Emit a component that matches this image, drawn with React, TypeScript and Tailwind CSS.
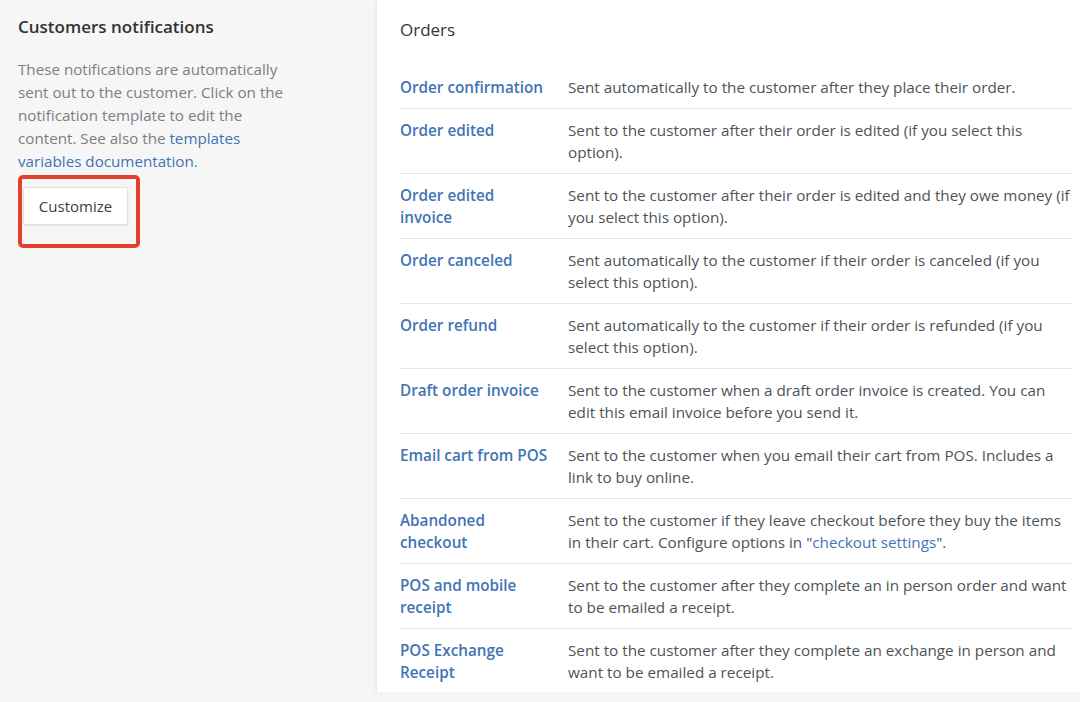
import React from 'react';

interface NotificationRow {
  name: string;
  description: React.ReactNode;
}

const rows: NotificationRow[] = [
  { name: 'Order confirmation', description: 'Sent automatically to the customer after they place their order.' },
  { name: 'Order edited', description: 'Sent to the customer after their order is edited (if you select this option).' },
  { name: 'Order edited invoice', description: 'Sent to the customer after their order is edited and they owe money (if you select this option).' },
  { name: 'Order canceled', description: 'Sent automatically to the customer if their order is canceled (if you select this option).' },
  { name: 'Order refund', description: 'Sent automatically to the customer if their order is refunded (if you select this option).' },
  { name: 'Draft order invoice', description: 'Sent to the customer when a draft order invoice is created. You can edit this email invoice before you send it.' },
  { name: 'Email cart from POS', description: 'Sent to the customer when you email their cart from POS. Includes a link to buy online.' },
  {
    name: 'Abandoned checkout',
    description: (
      <>
        Sent to the customer if they leave checkout before they buy the items in their cart. Configure options in "
        <a className="text-[#3f74b5]">checkout settings</a>".
      </>
    ),
  },
  { name: 'POS and mobile receipt', description: 'Sent to the customer after they complete an in person order and want to be emailed a receipt.' },
  { name: 'POS Exchange Receipt', description: 'Sent to the customer after they complete an exchange in person and want to be emailed a receipt.' },
];

export default function App() {
  return (
    <div
      className="flex w-[1080px] h-[702px] overflow-hidden bg-[#f6f6f7] text-[15.25px]"
      style={{ fontFamily: '"Open Sans", "Noto Sans", sans-serif' }}
    >
      {/* Sidebar */}
      <aside className="w-[376px] shrink-0 pl-[18px] pt-[14px]">
        <h2 className="text-[17px] font-semibold text-[#2f3337] leading-[26px]">Customers notifications</h2>
        <p className="mt-[18px] w-[272px] text-[15.2px] leading-[23px] text-[#7a7f84]">
          These notifications are automatically sent out to the customer. Click on the notification template to edit the
          content. See also the <a className="text-[#3f74b5]">templates variables documentation</a>.
        </p>
        {/* highlighted button */}
        <div className="mt-[2px] w-[122px] h-[73px] rounded-[5px] border-4 border-[#e5402d] pl-px pt-2">
          <button className="w-[105px] h-[38px] bg-white border border-[#e1e1e1] rounded-[2px] shadow-[0_1px_2px_rgba(0,0,0,0.08)] text-[15px] text-[#3a3d40]">
            Customize
          </button>
        </div>
      </aside>

      {/* Main panel */}
      <main className="w-[704px] h-[692px] bg-white border-l border-[#e9e9e9] shadow-[-2px_0_3px_rgba(0,0,0,0.03)] pl-[23px] pt-[17px]">
        <h3 className="text-[17px] text-[#333639] leading-[26px]">Orders</h3>
        <div className="mt-[23px] w-[672px]">
          {rows.map((row, i) => (
            <div
              key={row.name}
              className={`flex py-[10px] leading-[22px] ${i < rows.length - 1 ? 'border-b border-[#e4e5e7]' : ''}`}
            >
              <div className="w-[168px] shrink-0 pr-[20px] font-semibold text-[#3f74b5]">{row.name}</div>
              <div className="flex-1 text-[#4f5357]">{row.description}</div>
            </div>
          ))}
        </div>
      </main>
    </div>
  );
}
